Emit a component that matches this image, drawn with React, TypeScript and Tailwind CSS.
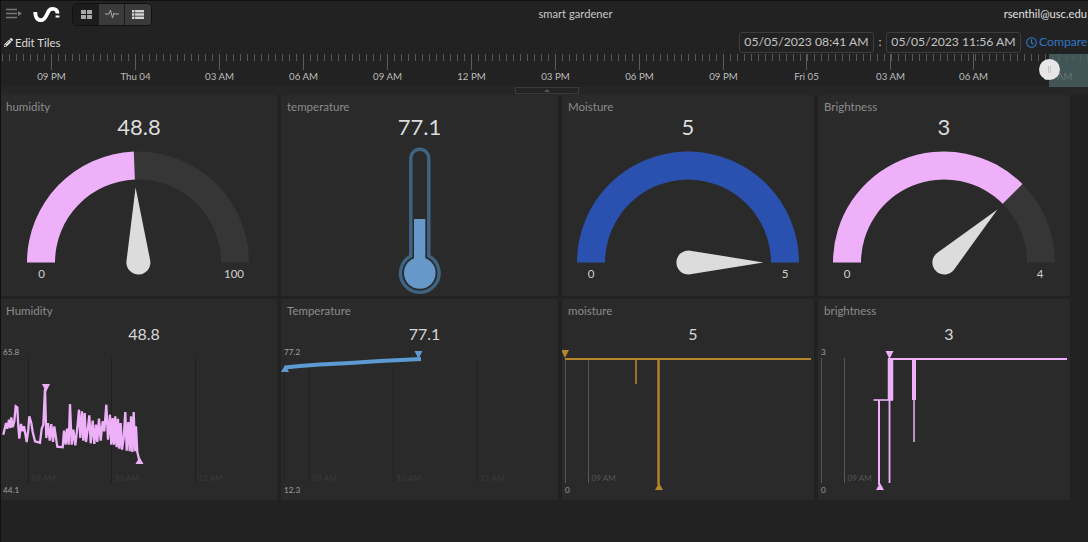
import React from "react";
import { FaPencilAlt, FaRegClock } from "react-icons/fa";

const PINK = "#eeb1f9";
const BLUE = "#5b9ad2";
const GOLD = "#b5862a";
const TEXT = "Lato, sans-serif";

function pt(cx: number, cy: number, r: number, a: number) {
  return [cx + r * Math.cos(a), cy + r * Math.sin(a)];
}

function arc(cx: number, cy: number, from: number, to: number) {
  const R = 111;
  const r = 83;
  const a0 = Math.PI + from * Math.PI;
  const a1 = Math.PI + to * Math.PI;
  const [x0, y0] = pt(cx, cy, R, a0);
  const [x1, y1] = pt(cx, cy, R, a1);
  const [x2, y2] = pt(cx, cy, r, a1);
  const [x3, y3] = pt(cx, cy, r, a0);
  return `M${x0} ${y0}A${R} ${R} 0 0 1 ${x1} ${y1}L${x2} ${y2}A${r} ${r} 0 0 0 ${x3} ${y3}Z`;
}

function needle(cx: number, cy: number, frac: number) {
  const a = Math.PI + frac * Math.PI;
  const len = 75;
  const r = 12;
  const spread = Math.acos(r / len);
  const [tx, ty] = pt(cx, cy, len, a);
  const [x1, y1] = pt(cx, cy, r, a + spread);
  const [x2, y2] = pt(cx, cy, r, a - spread);
  return `M${tx} ${ty}L${x1} ${y1}A${r} ${r} 0 1 1 ${x2} ${y2}Z`;
}

function Tile({
  title,
  value,
  small,
  first,
  box,
  children,
}: {
  title: string;
  value: string;
  small?: boolean;
  first?: boolean;
  box: string;
  children: React.ReactNode;
}) {
  return (
    <div className="flex h-[201px] flex-col overflow-hidden bg-[#2a2a2a]">
      <div className={first ? "h-[21px] pl-[5px] pt-[4px] text-[11.5px] leading-[16px] text-[#8c8c8c]" : "h-[21px] pl-[6px] pt-[4px] text-[11.5px] leading-[16px] text-[#8c8c8c]"}>
        {title}
      </div>
      <div
        className={
          small
            ? "h-[24px] pl-[10px] text-center text-[16px] leading-[28px] text-[#d8d8d8]"
            : "h-[24px] text-center text-[22px] leading-[22px] text-[#dcdcdc]"
        }
      >
        {value}
      </div>
      <svg viewBox={box} className="block h-[156px] w-full">
        {children}
      </svg>
    </div>
  );
}

function Gauge({
  cx,
  frac,
  color,
  max,
  maxX,
  minX,
}: {
  cx: number;
  frac: number;
  color: string;
  max: string;
  maxX: number;
  minX: number;
}) {
  const cy = 262.5;
  return (
    <g fontFamily={TEXT} fontSize="11.5" fill="#cfcfcf" textAnchor="middle">
      <path d={arc(cx, cy, 0, 1)} fill="#363636" />
      <path d={arc(cx, cy, 0, frac)} fill={color} />
      <path d={needle(cx + 0.4, cy, frac)} fill="#dcdcdc" />
      <text x={minX} y="278">0</text>
      <text x={maxX} y="278">{max}</text>
    </g>
  );
}

function Axis({ top, bottom, x }: { top: string; bottom: string; x: number }) {
  return (
    <g fontFamily={TEXT} fontSize="8.2" fill="#a0a0a0">
      <text x={x} y="355">{top}</text>
      <text x={x} y="493">{bottom}</text>
    </g>
  );
}

function Hours({ items, stroke, fill }: { items: [number, string][]; stroke: string; fill: string }) {
  return (
    <g fontFamily={TEXT} fontSize="8.2" fill={fill}>
      {items.map(([x, t]) => (
        <g key={x}>
          <line x1={x} x2={x} y1="358" y2="483" stroke={stroke} />
          {t && <text x={x + 3} y="481">{t}</text>}
        </g>
      ))}
    </g>
  );
}

function Down({ x, y, c }: { x: number; y: number; c: string }) {
  return <path d={`M${x - 4} ${y}h8l-4 8z`} fill={c} />;
}
function Up({ x, y, c }: { x: number; y: number; c: string }) {
  return <path d={`M${x - 4} ${y}h8l-4 -7z`} fill={c} />;
}

const humidityRaw = [
  10,410, 18,375, 22,392, 27,365, 31,390, 34,358, 38,388, 43,370, 47,325, 52,328, 55,385, 58,422, 63,378, 68,400, 72,385, 80,432, 85,395, 88,355, 94,375, 98,402, 105,430, 120,434,
  125,392, 130,380, 135,272, 139,420, 144,375, 149,428, 154,378, 159,432, 163,385, 172,446, 188,448, 192,398, 197,440, 201,392, 206,440, 210,318, 215,440, 220,395, 226,442, 232,390, 237,335, 241,420, 246,340, 250,428, 254,345,
  258,432, 263,395, 268,352, 272,436, 278,368, 283,438, 288,380, 292,432, 297,362, 302,428, 308,370, 313,400, 319,320, 324,425, 330,350, 334,440, 338,360, 342,440, 346,355, 350,448, 354,362, 358,452, 362,375, 366,455, 371,420,
  376,342, 380,458, 385,372, 389,460, 393,355, 397,462, 401,342, 405,460, 408,385, 412,462, 418,487,
];
const humidity = humidityRaw
  .reduce<string[]>((acc, v, i) => {
    if (i % 2 === 0) acc.push(`${(v / 3).toFixed(1)},${(298 + humidityRaw[i + 1] / 3).toFixed(1)}`);
    return acc;
  }, [])
  .join(" ");

const ticks = Array.from({ length: 156 }, (_, i) => 2.5 + i * 7);
const marks: [number, string][] = [
  [51.5, "09 PM"],
  [135.5, "Thu 04"],
  [219.5, "03 AM"],
  [303.5, "06 AM"],
  [387.5, "09 AM"],
  [471.5, "12 PM"],
  [555.5, "03 PM"],
  [639.5, "06 PM"],
  [723.5, "09 PM"],
  [806.5, "Fri 05"],
  [890.5, "03 AM"],
  [973.5, "06 AM"],
  [1058, "09 AM"],
];

export default function App() {
  return (
    <div className="relative h-[542px] w-[1088px] overflow-hidden border-l border-t border-[#101010] bg-[#222222] [font-family:Lato,sans-serif]">
      <header className="relative grid h-[29px] grid-cols-[1fr_auto_1fr] items-center pb-[3px]">
        <div className="flex items-center">
          <svg width="22" height="12" viewBox="0 0 22 12" className="ml-[5px]">
            <path d="M0 1.5h11M0 5.5h11M0 9.5h11" stroke="#777777" strokeWidth="1.6" />
            <path d="M12 3l4 2.5-4 2.5z" fill="#777777" />
          </svg>
          <svg width="28" height="18" viewBox="0 -1.5 28 18" className="ml-[5px]">
            <path
              d="M2.2 5.5C2.5 13 6 14 9 13.5C12.5 13 14 7 16 4C18 1.5 24.5 1.5 24.5 7M24.5 9V11"
              fill="none"
              stroke="#ffffff"
              strokeWidth="3.8"
            />
          </svg>
          <div className="ml-[11px] flex h-[23px] w-[80px] overflow-hidden rounded-[5px] border border-[#111111]">
            <div className="flex w-[26px] items-center justify-center bg-[#1c1c1c]">
              <svg width="11" height="9" viewBox="0 0 11 9" fill="#a8a8a8">
                <rect width="5" height="4" />
                <rect x="6" width="5" height="4" />
                <rect y="5" width="5" height="4" />
                <rect x="6" y="5" width="5" height="4" />
              </svg>
            </div>
            <div className="flex w-[26px] items-center justify-center border-r border-[#1a1a1a] bg-[#3a3a3a]">
              <svg width="14" height="10" viewBox="0 0 14 10">
                <path d="M0 5h4l1.5-4 2 8 1.5-5 .8 1H14" fill="none" stroke="#b5b5b5" strokeWidth="0.9" />
              </svg>
            </div>
            <div className="flex flex-1 items-center justify-center bg-[#3a3a3a]">
              <svg width="12" height="9" viewBox="0 0 12 9" fill="#d5d5d5">
                <rect width="12" height="2.4" />
                <rect y="3.3" width="12" height="2.4" />
                <rect y="6.6" width="12" height="2.4" />
                <rect x="2.4" width="0.7" height="9" fill="#3a3a3a" />
              </svg>
            </div>
          </div>
        </div>
        <div className="ml-[62px] text-[11.2px] text-[#c8c8c8]">smart gardener</div>
        <div className="pr-[1px] text-right text-[11.2px] text-[#e0e0e0]">rsenthil@usc.edu</div>
      </header>

      <div className="flex h-[24px] items-center pt-[1px]">
        <div className="ml-[3px] flex items-center gap-[2px] text-[11.5px] text-[#dddddd]">
          <FaPencilAlt size={9} color="#e6e6e6" />
          <span>Edit Tiles</span>
        </div>
        <div className="ml-auto flex items-center text-[12.2px] text-[#c4c4c4]">
          <div className="flex h-[21px] w-[135px] items-center justify-center rounded-[3px] border border-[#3c3c3c]">05/05/2023 08:41 AM</div>
          <div className="w-[12px] text-center">:</div>
          <div className="flex h-[21px] w-[135px] items-center justify-center rounded-[3px] border border-[#3c3c3c]">05/05/2023 11:56 AM</div>
          <div className="ml-[5px] flex w-[62px] items-center gap-[2px] whitespace-nowrap text-[#2f78c4]">
            <FaRegClock size={11} className="shrink-0" />
            <span>Compare</span>
          </div>
        </div>
      </div>

      <div className="relative h-[33px]">
        <svg viewBox="1 54 1087 33" className="block h-[33px] w-full">
          {ticks.map((x) => (
            <line key={x} x1={x} x2={x} y1="54" y2="61" stroke="#565656" />
          ))}
          {marks.map(([x, t]) => (
            <g key={t + x}>
              <line x1={x} x2={x} y1="54" y2="70" stroke="#5c5c5c" />
              <text x={x} y="80" fontFamily={TEXT} fontSize="9.7" fill="#bdbdbd" textAnchor="middle">{t}</text>
            </g>
          ))}
        </svg>
        <div className="absolute right-0 top-0 h-[33px] w-[39px] bg-[#4a6264]/80" />
        <div className="absolute left-[1038px] top-[5px] flex h-[21px] w-[21px] items-center justify-center rounded-full bg-[#e6e6e6]">
          <div className="h-[7px] w-[3px] border-x border-[#c4c4c4]" />
        </div>
      </div>

      <div className="h-[8px] bg-[#262626]">
        <div className="relative left-[514px] flex h-[7px] w-[64px] justify-center border border-[#3a3a3a] bg-[#232323] pt-[1px]">
          <div className="h-0 w-0 border-x-[3px] border-b-[3px] border-x-transparent border-b-[#555555]" />
        </div>
      </div>

      <main className="grid grid-cols-[276px_277px_252px_252px] grid-rows-[201px_201px] gap-x-[4px] gap-y-[3px]">
        <Tile first title="humidity" value="48.8" box="1 140 276 156">
          <Gauge cx={138} frac={0.488} color={PINK} max="100" minX={41.5} maxX={234} />
        </Tile>
        <Tile title="temperature" value="77.1" box="281 140 277 156">
          <path d="M414 219h11.3v45h-11.3z" fill="#6699c9" />
          <path
            d="M410.8 256V158.2A9 9 0 0 1 428.8 158.2V256A19.3 19.3 0 1 1 410.8 256Z"
            fill="none"
            stroke="#3e6484"
            strokeWidth="3.4"
          />
          <circle cx="419.8" cy="273" r="15.8" fill="#6699c9" />
        </Tile>
        <Tile title="Moisture" value="5" box="562 140 252 156">
          <Gauge cx={688} frac={1} color="#2a50b0" max="5" minX={591} maxX={785} />
        </Tile>
        <Tile title="Brightness" value="3" box="818 140 252 156">
          <Gauge cx={944} frac={0.75} color={PINK} max="4" minX={847} maxX={1040} />
        </Tile>

        <Tile small first title="Humidity" value="48.8" box="1 344 276 156">
          <Hours items={[[28.5, "09 AM"], [111.5, "10 AM"], [195.5, "11 AM"]]} stroke="#1f1f1f" fill="#3a3a3a" />
          <Axis top="65.8" bottom="44.1" x={3} />
          <polyline points={humidity} fill="none" stroke={PINK} strokeWidth="2.3" />
          <Down x={46} y={384} c={PINK} />
          <Up x={139.5} y={464} c={PINK} />
        </Tile>
        <Tile small title="Temperature" value="77.1" box="281 344 277 156">
          <Hours items={[[284.5, ""], [309.5, "09 AM"], [393.5, "10 AM"], [477.5, "11 AM"]]} stroke="#222222" fill="#3a3a3a" />
          <Axis top="77.2" bottom="12.3" x={284} />
          <polyline points="285,367.5 300,366 320,364.5 350,363 380,361 421,359" fill="none" stroke={BLUE} strokeWidth="3.8" />
          <Down x={418.5} y={351} c={BLUE} />
          <Up x={285} y={372} c={BLUE} />
        </Tile>
        <Tile small title="moisture" value="5" box="562 344 252 156">
          <Hours items={[[565.5, ""], [588.5, "09 AM"]]} stroke="#565656" fill="#565656" />
          <Axis top="" bottom="0" x={565} />
          <path d="M565 359H811" stroke={GOLD} strokeWidth="1.8" fill="none" />
          <path d="M636 359V384" stroke={GOLD} strokeWidth="1.6" fill="none" />
          <path d="M658.5 359V485" stroke={GOLD} strokeWidth="2.4" fill="none" />
          <Down x={565} y={350} c={GOLD} />
          <Up x={659} y={490} c={GOLD} />
        </Tile>
        <Tile small title="brightness" value="3" box="818 344 252 156">
          <Hours items={[[821.5, ""], [844.5, "09 AM"]]} stroke="#565656" fill="#565656" />
          <Axis top="3" bottom="0" x={821} />
          <g stroke={PINK} fill="none">
            <path d="M888 359H1067" strokeWidth="1.8" />
            <path d="M873.5 400H893" strokeWidth="1.6" />
            <path d="M879 400V485" strokeWidth="2" />
            <path d="M889.5 400V483" strokeWidth="1.8" />
            <path d="M890.5 359V400" strokeWidth="5.5" />
            <path d="M914 359V400" strokeWidth="4" />
            <path d="M914 400V442" strokeWidth="1.5" />
          </g>
          <Down x={889.5} y={351} c={PINK} />
          <Up x={880} y={490} c={PINK} />
        </Tile>
      </main>
    </div>
  );
}
